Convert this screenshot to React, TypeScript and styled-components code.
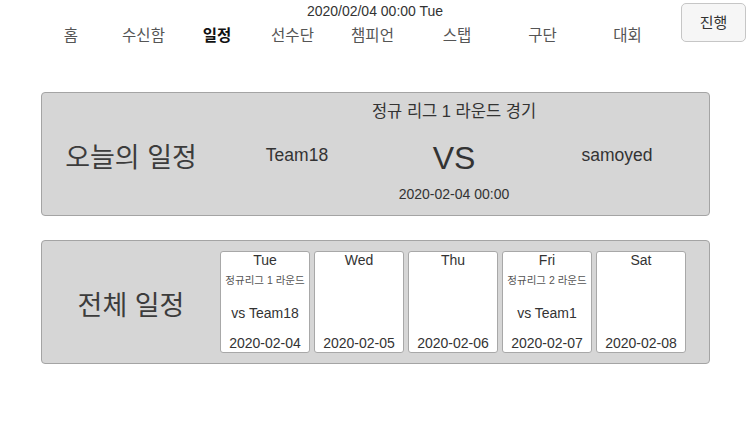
import React from "react";
import styled, { createGlobalStyle } from "styled-components";

type Day = {
  name: string;
  date: string;
  round?: string;
  opponent?: string;
};

const navItems = [
  { label: "홈", w: 72 },
  { label: "수신함", w: 73 },
  { label: "일정", w: 74, active: true },
  { label: "선수단", w: 77 },
  { label: "챔피언", w: 83 },
  { label: "스탭", w: 86 },
  { label: "구단", w: 85 },
  { label: "대회", w: 85 },
];

const days: Day[] = [
  { name: "Tue", date: "2020-02-04", round: "정규리그 1 라운드", opponent: "vs Team18" },
  { name: "Wed", date: "2020-02-05" },
  { name: "Thu", date: "2020-02-06" },
  { name: "Fri", date: "2020-02-07", round: "정규리그 2 라운드", opponent: "vs Team1" },
  { name: "Sat", date: "2020-02-08" },
];

function App() {
  return (
    <>
      <GlobalStyle />
      <Header>
        <CurrentDate>2020/02/04 00:00 Tue</CurrentDate>
        <Nav>
          {navItems.map((item) => (
            <NavItem key={item.label} $w={item.w} $active={item.active}>
              {item.label}
            </NavItem>
          ))}
        </Nav>
        <ProceedButton>진행</ProceedButton>
      </Header>
      <Main>
        <Panel>
          <PanelTitle>오늘의 일정</PanelTitle>
          <TeamName>Team18</TeamName>
          <MatchCenter>
            <RoundLabel>정규 리그 1 라운드 경기</RoundLabel>
            <Versus>VS</Versus>
            <MatchTime>2020-02-04 00:00</MatchTime>
          </MatchCenter>
          <TeamName>samoyed</TeamName>
        </Panel>
        <Panel $week>
          <PanelTitle>전체 일정</PanelTitle>
          <Week>
            {days.map((d) => (
              <DayCard key={d.name}>
                <DayName>{d.name}</DayName>
                <DayRound>{d.round}</DayRound>
                <DayOpponent>{d.opponent}</DayOpponent>
                <DayDate>{d.date}</DayDate>
              </DayCard>
            ))}
          </Week>
        </Panel>
      </Main>
    </>
  );
}

const GlobalStyle = createGlobalStyle`
  html, body {
    margin: 0;
    padding: 0;
    background: #ffffff;
  }
  body {
    font-family: "Liberation Sans", "Noto Sans CJK KR", sans-serif;
    color: #333;
  }
`;

const Header = styled.header`
  position: relative;
  height: 50px;
`;

const CurrentDate = styled.div`
  padding-top: 3px;
  height: 16px;
  line-height: 16px;
  font-size: 14px;
  text-align: center;
  color: #333;
`;

const Nav = styled.nav`
  display: flex;
  margin: 7px 0 0 35px;
`;

const NavItem = styled.div<{ $w: number; $active?: boolean }>`
  width: ${(p) => p.$w}px;
  text-align: center;
  font-size: 15.5px;
  line-height: 20px;
  color: ${(p) => (p.$active ? "#111" : "#555")};
  font-weight: ${(p) => (p.$active ? 700 : 400)};
`;

const ProceedButton = styled.button`
  position: absolute;
  top: 3px;
  right: 4px;
  width: 65px;
  height: 39px;
  background: #f6f6f6;
  border: 1px solid #c6c6c6;
  border-radius: 5px;
  font-family: "Liberation Sans", "Noto Sans CJK KR", sans-serif;
  font-size: 15px;
  color: #333;
  padding: 0 0 3px;
`;

const Main = styled.main`
  display: flex;
  flex-direction: column;
  gap: 24px;
  margin: 42px 0 0 41px;
  width: 669px;
`;

const Panel = styled.section<{ $week?: boolean }>`
  box-sizing: border-box;
  height: 124px;
  display: grid;
  grid-template-columns: ${(p) => (p.$week ? "178px 1fr" : "178px 154px 160px 166px")};
  align-items: center;
  background: #d6d6d6;
  border: 1px solid #a4a4a4;
  border-radius: 4px;
`;

const PanelTitle = styled.h2`
  margin: 0;
  font-size: 27px;
  font-weight: 400;
  text-align: center;
  color: #3c3c3c;
  padding-top: 2px;
`;

const TeamName = styled.div`
  font-size: 17.5px;
  text-align: center;
  color: #333;
  padding-top: 2px;
`;

const MatchCenter = styled.div`
  align-self: stretch;
  display: flex;
  flex-direction: column;
  align-items: center;
  padding-top: 8px;
`;

const RoundLabel = styled.div`
  font-size: 16.5px;
  line-height: 20px;
  color: #333;
  white-space: nowrap;
`;

const Versus = styled.div`
  margin-top: 20px;
  font-size: 32px;
  line-height: 34px;
  color: #333;
`;

const MatchTime = styled.div`
  margin-top: 11px;
  font-size: 14px;
  line-height: 16px;
  color: #333;
`;

const Week = styled.div`
  display: flex;
  gap: 4px;
`;

const DayCard = styled.div`
  box-sizing: border-box;
  width: 90px;
  height: 102px;
  display: flex;
  flex-direction: column;
  align-items: center;
  background: #ffffff;
  border: 1px solid #a8a8a8;
  border-radius: 3px;
`;

const DayName = styled.div`
  height: 17px;
  line-height: 17px;
  font-size: 14px;
  color: #333;
`;

const DayRound = styled.div`
  height: 22px;
  line-height: 22px;
  font-size: 10.5px;
  color: #555;
  white-space: nowrap;
`;

const DayOpponent = styled.div`
  flex: 1;
  display: flex;
  align-items: center;
  font-size: 14px;
  color: #333;
`;

const DayDate = styled.div`
  height: 18px;
  line-height: 18px;
  font-size: 14px;
  color: #333;
`;

export default App;
